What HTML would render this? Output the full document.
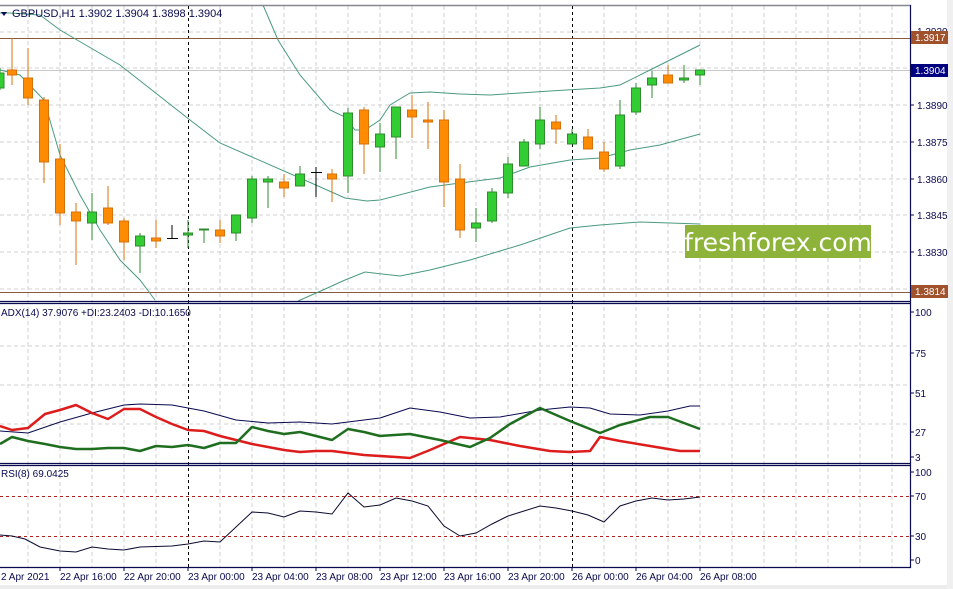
<!DOCTYPE html>
<html><head><meta charset="utf-8"><style>
html,body{margin:0;padding:0;background:#fff;width:953px;height:589px;overflow:hidden}
svg{display:block;font-family:"Liberation Sans",sans-serif}
</style></head><body>
<svg width="953" height="589" viewBox="0 0 953 589" xmlns="http://www.w3.org/2000/svg">
<rect width="953" height="589" fill="#fff"/>
<rect x="0" y="585" width="953" height="4" fill="#ececec"/>
<rect x="947" y="0" width="6" height="589" fill="#f0f0f0"/>
<!-- grid -->
<g stroke="#d0d0d0" stroke-dasharray="4,3" stroke-width="1">
<path d="M28 6V567M60 6V567M92 6V567M124 6V567M156 6V567M220 6V567M252 6V567M284 6V567M316 6V567M348 6V567M380 6V567M412 6V567M444 6V567M476 6V567M508 6V567M540 6V567M604 6V567M636 6V567M668 6V567M700 6V567M732 6V567M764 6V567M796 6V567M828 6V567M860 6V567M892 6V567"/>
<path d="M0 32H910M0 68H910M0 105H910M0 142H910M0 179H910M0 215H910M0 252H910M0 289H910"/>
<path d="M0 346H910M0 385H910M0 424H910"/>
</g>
<!-- period separators -->
<g stroke="#000" stroke-dasharray="3,3"><path d="M188.5 6V567M572.5 6V567"/></g>
<!-- hlines -->
<path d="M0 38.5H910M0 292.5H910" stroke="#8b5a3c" stroke-width="1"/>
<path d="M0 70.5H910" stroke="#c8c8c8"/>
<!-- bollinger -->
<g fill="none" stroke="#4a9a80" stroke-width="1">
<polyline points="0,13 10,13 40,15 60,30 120,65 190,120 220,143 300,178 345,198 367,201 380,200 430,187 460,183 500,178 530,167 570,160 600,158 630,150 660,145 700,134"/>
<polyline points="263,5 278,40 300,75 330,110 345,117 355,130 365,130 380,120 390,105 410,93 430,92 460,94 490,95 520,93 550,91 600,88 620,85 650,70 680,55 700,45"/>
<polyline points="0,70 20,75 44,100 60,155 80,195 100,230 120,260 140,280 155,300"/>
<polyline points="298,301 323,290 345,280 365,272 400,276 430,270 470,260 520,245 570,228 600,225 640,222 700,224"/>
</g>
<!-- candles -->
<g stroke-width="1">
<g stroke="#2e8b2e" fill="#32cd32">
<path d="M0 68V90"/><rect x="-4" y="73" width="8" height="15"/>
<path d="M92 193V240"/><rect x="87.5" y="212" width="9" height="11"/>
<path d="M140 233V273"/><rect x="135.5" y="236" width="9" height="10"/>
<path d="M188 220V248"/><rect x="183.5" y="233" width="9" height="2"/>
<path d="M204 229V243"/><rect x="199.5" y="229" width="9" height="1"/>
<path d="M236 215V241"/><rect x="231.5" y="215" width="9" height="18"/>
<path d="M252 176V223"/><rect x="247.5" y="179" width="9" height="39"/>
<path d="M268 176V208"/><rect x="263.5" y="179" width="9" height="3"/>
<path d="M300 166V186"/><rect x="295.5" y="174" width="9" height="12"/>
<path d="M348 108V193"/><rect x="343.5" y="113" width="9" height="63"/>
<path d="M380 123V172"/><rect x="375.5" y="134" width="9" height="13"/>
<path d="M396 107V159"/><rect x="391.5" y="107" width="9" height="30"/>
<path d="M476 208V242"/><rect x="471.5" y="223" width="9" height="5"/>
<path d="M492 188V223"/><rect x="487.5" y="192" width="9" height="29"/>
<path d="M508 157V198"/><rect x="503.5" y="164" width="9" height="29"/>
<path d="M524 139V166"/><rect x="519.5" y="142" width="9" height="24"/>
<path d="M540 107V149"/><rect x="535.5" y="120" width="9" height="24"/>
<path d="M572 129V144"/><rect x="567.5" y="134" width="9" height="10"/>
<path d="M620 100V169"/><rect x="615.5" y="115" width="9" height="51"/>
<path d="M636 83V115"/><rect x="631.5" y="88" width="9" height="24"/>
<path d="M652 71V98"/><rect x="647.5" y="78" width="9" height="7"/>
<path d="M684 65V83"/><rect x="679.5" y="78" width="9" height="2"/>
<path d="M700 70V85"/><rect x="695.5" y="70" width="9" height="5"/>
</g>
<g stroke="#d8700a" fill="#ff8c00">
<path d="M12 38V85"/><rect x="7.5" y="70" width="9" height="5"/>
<path d="M28 48V105"/><rect x="23.5" y="78" width="9" height="20"/>
<path d="M44 97V183"/><rect x="39.5" y="100" width="9" height="62"/>
<path d="M60 144V225"/><rect x="55.5" y="159" width="9" height="54"/>
<path d="M76 203V265"/><rect x="71.5" y="212" width="9" height="9"/>
<path d="M108 186V225"/><rect x="103.5" y="208" width="9" height="15"/>
<path d="M124 218V260"/><rect x="119.5" y="221" width="9" height="21"/>
<path d="M156 220V248"/><rect x="151.5" y="238" width="9" height="3"/>
<path d="M220 220V243"/><rect x="215.5" y="230" width="9" height="6"/>
<path d="M284 174V197"/><rect x="279.5" y="182" width="9" height="6"/>
<path d="M332 169V202"/><rect x="327.5" y="174" width="9" height="5"/>
<path d="M364 107V174"/><rect x="359.5" y="110" width="9" height="34"/>
<path d="M412 95V138"/><rect x="407.5" y="110" width="9" height="7"/>
<path d="M428 102V149"/><rect x="423.5" y="120" width="9" height="2"/>
<path d="M444 110V207"/><rect x="439.5" y="120" width="9" height="62"/>
<path d="M460 164V238"/><rect x="455.5" y="179" width="9" height="51"/>
<path d="M556 115V144"/><rect x="551.5" y="122" width="9" height="7"/>
<path d="M588 129V149"/><rect x="583.5" y="137" width="9" height="12"/>
<path d="M604 142V172"/><rect x="599.5" y="152" width="9" height="17"/>
<path d="M668 65V83"/><rect x="663.5" y="75" width="9" height="8"/>
</g>
<g stroke="#000"><path d="M172 225V238M167 238.5H178M316 167V197M311 172.5H322"/></g>
</g>
<!-- ADX -->
<g fill="none" stroke-linejoin="round">
<polyline stroke="#0a0a50" stroke-width="1" points="0,431 28,433 60,422 92,413 124,405 140,404 172,405 188,408 204,411 236,420 268,423 300,422 332,424 380,418 410,408 440,412 470,418 500,417 540,410 570,407 590,408 610,414 640,415 668,411 690,406 700,406"/>
<polyline stroke="#dd1c1c" stroke-width="2.5" points="0,426 12,430 28,428 45,414 60,410 76,405 92,413 108,419 124,409 140,409 156,417 172,424 188,430 204,431 220,436 236,440 252,444 268,447 284,450 300,452 316,451 332,451 348,453 364,455 380,456 396,457 410,458 430,450 460,437 490,440 520,446 550,451 570,452 590,451 600,437 620,441 650,446 680,451 700,451"/>
<polyline stroke="#1f6e1f" stroke-width="2.5" points="0,444 12,437 28,441 45,444 60,447 76,449 92,449 108,448 124,448 140,451 156,446 172,447 188,445 204,448 220,443 236,443 252,427 268,431 284,434 300,432 316,436 332,440 348,429 364,432 380,436 410,434 440,440 470,447 490,438 510,424 540,408 570,421 600,433 620,425 650,417 668,417 700,429"/>
</g>
<!-- RSI -->
<g stroke="#b02020" stroke-dasharray="3,3"><path d="M0 496.5H910M0 536.5H910"/></g>
<polyline fill="none" stroke="#0a0a30" stroke-width="1" points="0,535 12,536 25,539 40,547 60,551 76,552 92,547 108,549 124,550 140,547 172,546 188,544 204,541 220,542 252,512 268,513 284,517 300,511 316,512 332,514 348,493 364,507 380,505 396,498 412,501 428,506 444,526 460,536 476,533 492,524 508,516 524,511 540,506 556,508 572,511 588,515 604,522 620,506 636,501 652,498 668,500 684,499 700,497"/>
<!-- frames -->
<g stroke="#0a0a50" stroke-width="1.2" fill="none">
<path d="M0 5.5H910.5V567.5H0"/>
<path d="M0 301.5H910M0 303.5H910M0 463.5H910M0 465.5H910"/>
</g>
<path d="M0 5.5H910" stroke="#888"/>
<!-- axis ticks -->
<g stroke="#0a0a50"><path d="M910 32h4M910 105h4M910 142h4M910 179h4M910 215h4M910 252h4M910 312h4M910 353h4M910 393h4M910 432h4M910 457h4M910 472h4M910 496h4M910 536h4M910 560h4M60 567v4M124 567v4M188 567v4M252 567v4M316 567v4M380 567v4M444 567v4M508 567v4M572 567v4M636 567v4M700 567v4"/></g>
<g font-size="10" fill="#0a0a50">
<text x="917" y="35">1.3920</text>
<text x="917" y="109">1.3890</text>
<text x="917" y="146">1.3875</text>
<text x="917" y="183">1.3860</text>
<text x="917" y="219">1.3845</text>
<text x="917" y="256">1.3830</text>
<text x="915" y="316">100</text>
<text x="915" y="357">75</text>
<text x="915" y="397">51</text>
<text x="915" y="436">27</text>
<text x="915" y="461">3</text>
<text x="915" y="476">100</text>
<text x="915" y="500">70</text>
<text x="915" y="540">30</text>
<text x="915" y="564">0</text>
</g>
<rect x="911" y="31" width="37" height="13" fill="#a0522d"/>
<text x="915" y="41" font-size="10" fill="#fff">1.3917</text>
<rect x="911" y="64" width="37" height="13" fill="#000080"/>
<text x="915" y="74" font-size="10" fill="#fff">1.3904</text>
<rect x="911" y="285" width="37" height="13" fill="#a0522d"/>
<text x="915" y="295" font-size="10" fill="#fff">1.3814</text>
<!-- labels -->
<g font-size="10" fill="#0a0a50">
<path d="M1 12h6l-3 4z" fill="#0a0a50"/>
<text x="12" y="17" font-size="11">GBPUSD,H1  1.3902 1.3904 1.3898 1.3904</text>
<text x="1" y="316" font-size="10">ADX(14) 37.9076 +DI:23.2403 -DI:10.1650</text>
<text x="1" y="477" font-size="10">RSI(8) 69.0425</text>
<text x="1" y="580">2 Apr 2021</text>
<text x="60" y="580">22 Apr 16:00</text>
<text x="124" y="580">22 Apr 20:00</text>
<text x="188" y="580">23 Apr 00:00</text>
<text x="252" y="580">23 Apr 04:00</text>
<text x="316" y="580">23 Apr 08:00</text>
<text x="380" y="580">23 Apr 12:00</text>
<text x="444" y="580">23 Apr 16:00</text>
<text x="508" y="580">23 Apr 20:00</text>
<text x="572" y="580">26 Apr 00:00</text>
<text x="636" y="580">26 Apr 04:00</text>
<text x="700" y="580">26 Apr 08:00</text>
</g>
<!-- logo -->
<rect x="685" y="225" width="186" height="33" fill="#8db33a"/>
<text x="778" y="251" font-size="25" fill="#fff" text-anchor="middle" font-family="DejaVu Sans, Liberation Sans, sans-serif">freshforex.com</text>
</svg>
</body></html>
